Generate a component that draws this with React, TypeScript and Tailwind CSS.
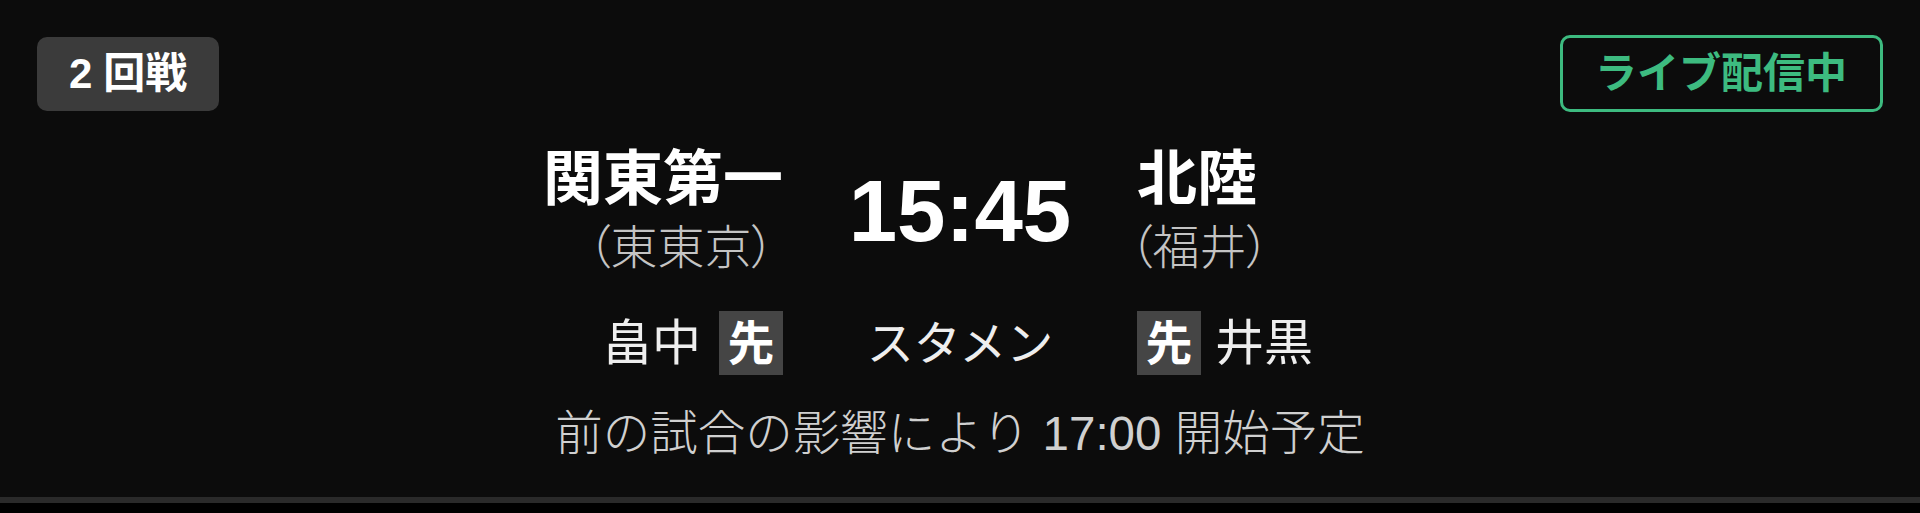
import React from "react";

const FONT = '"Liberation Sans", "Noto Sans CJK JP", sans-serif';

function StarterBadge() {
  return (
    <span className="flex h-[64px] w-[64px] items-center justify-center bg-[#454545] text-[47px] font-bold leading-none text-white">
      先
    </span>
  );
}

export default function App() {
  return (
    <div className="h-[513px] w-full bg-black" style={{ fontFamily: FONT }}>
      <div className="flex h-[503px] flex-col border-b-[6px] border-[#2a2a2a] bg-[#0c0c0c]">
        {/* top row */}
        <div className="flex items-start justify-between px-[37px] pt-[35px]">
          <div className="mt-[2px] flex h-[74px] items-center rounded-[10px] bg-[#3b3b3b] px-[32px] text-[42px] font-bold leading-none text-white">
            <span className="mr-[11px]">2</span>回戦
          </div>
          <div className="flex h-[77px] items-center rounded-[10px] border-[3px] border-[#3dbb80] pl-[32px] pr-[33px] text-[42px] font-bold leading-none text-[#3dbb80]">
            ライブ配信中
          </div>
        </div>

        {/* match grid */}
        <div className="mt-[33px] grid grid-cols-[1fr_354px_1fr] gap-y-[30px]">
          <div className="flex flex-col items-end">
            <div className="text-[60px] font-bold leading-[70px] text-white">関東第一</div>
            <div className="mr-[8px] text-[47px] font-light leading-[66px] text-[#c4c4c4] [font-feature-settings:'palt']">
              （東東京）
            </div>
          </div>
          <div className="flex items-center justify-center pb-[6px] text-[87px] font-bold leading-none text-white">
            15:45
          </div>
          <div className="flex flex-col items-start">
            <div className="text-[60px] font-bold leading-[70px] text-white">北陸</div>
            <div className="ml-[-8px] text-[47px] font-light leading-[66px] text-[#c4c4c4] [font-feature-settings:'palt']">
              （福井）
            </div>
          </div>

          <div className="flex items-center justify-end gap-[18px]">
            <span className="text-[49px] leading-none text-[#eeeeee]">畠中</span>
            <StarterBadge />
          </div>
          <div className="flex items-center justify-center text-[47px] leading-none text-[#eeeeee]">
            スタメン
          </div>
          <div className="flex items-center justify-start gap-[14px]">
            <StarterBadge />
            <span className="text-[49px] leading-none text-[#eeeeee]">井黒</span>
          </div>
        </div>

        {/* note */}
        <div className="mt-[29px] text-center text-[47.5px] font-light leading-[60px] text-[#d0d0d0]">
          前の試合の影響により 17:00 開始予定
        </div>
      </div>
    </div>
  );
}
